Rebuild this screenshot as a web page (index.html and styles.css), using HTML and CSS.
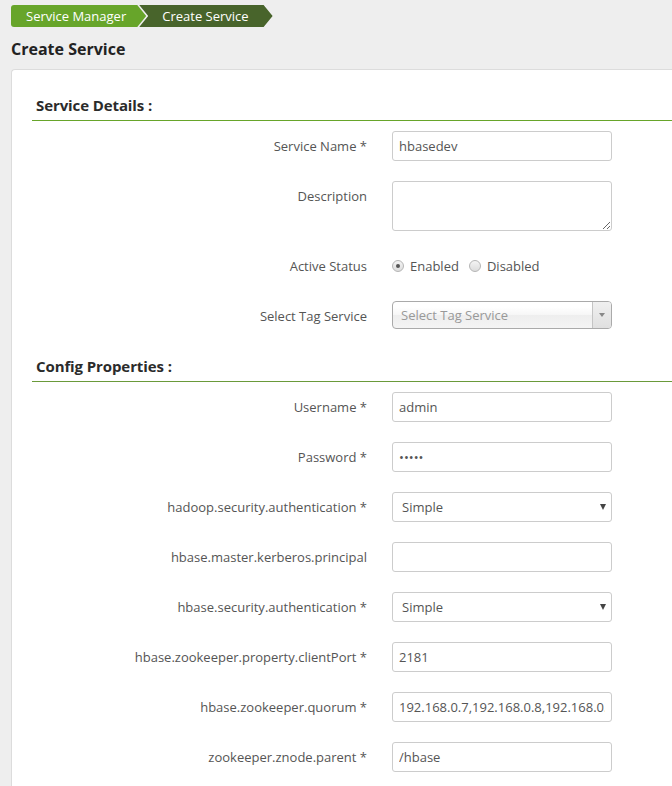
FILE: index.html
```html
<!DOCTYPE html>
<html>
<head>
<meta charset="utf-8">
<link rel="stylesheet" href="styles.css">
</head>
<body>
<div class="crumbs">
  <span class="crumb crumb-first">Service Manager</span>
  <span class="crumb crumb-last">Create Service</span>
</div>
<h1 class="page-title">Create Service</h1>
<div class="panel">
  <div class="section-head">Service Details :</div>
  <div class="form">
    <div class="row">
      <label class="lbl">Service Name *</label>
      <input class="field" type="text" value="hbasedev">
    </div>
    <div class="row">
      <label class="lbl">Description</label>
      <textarea class="field area"></textarea>
    </div>
    <div class="row">
      <label class="lbl">Active Status</label>
      <div class="radios">
        <label class="radio"><input type="radio" name="st" checked><span>Enabled</span></label>
        <label class="radio"><input type="radio" name="st"><span>Disabled</span></label>
      </div>
    </div>
    <div class="row row-last">
      <label class="lbl">Select Tag Service</label>
      <div class="tagsel">
        <span class="tagsel-text">Select Tag Service</span>
        <span class="tagsel-arrow"><b></b></span>
      </div>
    </div>
  </div>
  <div class="section-head section-second">Config Properties :</div>
  <div class="form">
    <div class="row">
      <label class="lbl">Username *</label>
      <input class="field" type="text" value="admin">
    </div>
    <div class="row">
      <label class="lbl">Password *</label>
      <input class="field" type="password" value="admin">
    </div>
    <div class="row">
      <label class="lbl">hadoop.security.authentication *</label>
      <div class="selwrap"><select class="field sel"><option>Simple</option></select></div>
    </div>
    <div class="row">
      <label class="lbl">hbase.master.kerberos.principal</label>
      <input class="field" type="text" value="">
    </div>
    <div class="row">
      <label class="lbl">hbase.security.authentication *</label>
      <div class="selwrap"><select class="field sel"><option>Simple</option></select></div>
    </div>
    <div class="row">
      <label class="lbl">hbase.zookeeper.property.clientPort *</label>
      <input class="field" type="text" value="2181">
    </div>
    <div class="row">
      <label class="lbl">hbase.zookeeper.quorum *</label>
      <input class="field" type="text" value="192.168.0.7,192.168.0.8,192.168.0.9">
    </div>
    <div class="row">
      <label class="lbl">zookeeper.znode.parent *</label>
      <input class="field" type="text" value="/hbase">
    </div>
  </div>
</div>
</body>
</html>
```

FILE: styles.css
```css
html, body {
  margin: 0;
  padding: 0;
}
body {
  background: #eeeeee;
  font-family: "Open Sans", "Liberation Sans", sans-serif;
  font-size: 13px;
  color: #555;
  overflow: hidden;
}
.crumbs {
  display: flex;
  padding: 5px 11px 0;
  height: 22px;
}
.crumb {
  display: block;
  height: 22px;
  line-height: 22px;
  color: #fff;
  font-size: 13px;
  white-space: nowrap;
}
.crumb-first {
  position: relative;
  z-index: 2;
  background: #67a52a;
  padding: 0 20px 0 15px;
  border-radius: 3px 0 0 3px;
  clip-path: polygon(0 0, calc(100% - 9px) 0, 100% 50%, calc(100% - 9px) 100%, 0 100%);
}
.crumb-last {
  background: #48642b;
  margin-left: -7px;
  padding: 0 24px 0 23px;
  clip-path: polygon(0 0, calc(100% - 9px) 0, 100% 50%, calc(100% - 9px) 100%, 0 100%, 9px 50%);
}
.page-title {
  margin: 12px 11px 10px;
  font-size: 16px;
  line-height: 20px;
  font-weight: 700;
  color: #222;
}
.panel {
  margin-left: 11px;
  background: #fff;
  border: 1px solid #dcdcdc;
  border-right: none;
  border-radius: 4px 0 0 0;
  padding: 25px 0 40px 20px;
}
.section-head {
  font-size: 15px;
  font-weight: 700;
  letter-spacing: -0.1px;
  line-height: 20px;
  color: #2b2b2b;
  padding: 0 0 5px 4px;
  border-bottom: 1px solid #67a52a;
}
.section-second {
  margin-top: 25px;
  border-bottom-color: #6a9a3a;
}
.form {
  padding-top: 10px;
}
.row {
  display: flex;
  align-items: flex-start;
  margin-bottom: 20px;
}
.lbl {
  width: 335px;
  flex: none;
  text-align: right;
  line-height: 30px;
  color: #555;
  margin-right: 25px;
  white-space: nowrap;
}
.field {
  box-sizing: border-box;
  width: 220px;
  height: 30px;
  border: 1px solid #cccccc;
  border-radius: 3px;
  padding: 0 6px;
  font-family: "Open Sans", "Liberation Sans", sans-serif;
  font-size: 13px;
  color: #555;
  background: #fff;
  margin: 0;
  outline: none;
}
.area {
  height: 50px;
  resize: vertical;
  display: block;
}
.radios {
  display: flex;
  align-items: center;
  height: 30px;
}
.radio {
  display: flex;
  align-items: center;
  margin-right: 10px;
  color: #555;
}
.radio input {
  appearance: none;
  -webkit-appearance: none;
  box-sizing: border-box;
  width: 12px;
  height: 12px;
  border-radius: 50%;
  border: 1px solid #b5b5b5;
  background: linear-gradient(#f4f4f4, #dcdcdc);
  margin: 0 6px 0 0;
  position: relative;
}
.radio input:checked::after {
  content: "";
  position: absolute;
  left: 3px;
  top: 3px;
  width: 4px;
  height: 4px;
  border-radius: 50%;
  background: #555;
}
.tagsel {
  box-sizing: border-box;
  width: 220px;
  height: 28px;
  border: 1px solid #aaa;
  border-radius: 4px;
  background: linear-gradient(#ffffff 20%, #f6f6f6 50%, #eeeeee 52%, #f4f4f4 100%);
  display: flex;
  align-items: center;
  justify-content: space-between;
  overflow: hidden;
}
.tagsel-text {
  color: #999;
  padding-left: 8px;
  line-height: 26px;
}
.tagsel-arrow {
  width: 18px;
  height: 26px;
  border-left: 1px solid #c4c4c4;
  background: linear-gradient(#f0f0f0, #e0e0e0);
  display: flex;
  align-items: center;
  justify-content: center;
}
.tagsel-arrow b {
  width: 0;
  height: 0;
  border-left: 3px solid transparent;
  border-right: 3px solid transparent;
  border-top: 4px solid #888;
}
.selwrap {
  position: relative;
  width: 220px;
}
.sel {
  appearance: none;
  -webkit-appearance: none;
  padding-left: 9px;
}
.selwrap::after {
  content: "";
  position: absolute;
  right: 6px;
  top: 12px;
  width: 0;
  height: 0;
  border-left: 3.5px solid transparent;
  border-right: 3.5px solid transparent;
  border-top: 6px solid #444;
  pointer-events: none;
}
```
